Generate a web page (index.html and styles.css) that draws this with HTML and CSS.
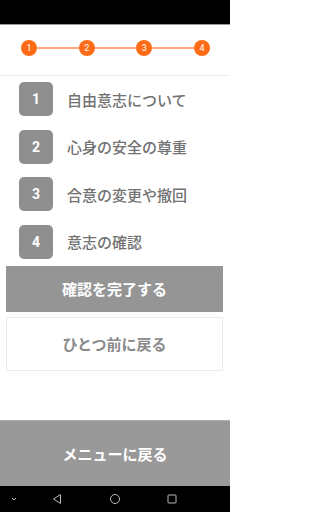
FILE: index.html
```html
<!DOCTYPE html>
<html lang="ja">
<head>
<meta charset="utf-8">
<link rel="stylesheet" href="styles.css">
</head>
<body>
<div class="page">
  <div class="statusbar"></div>
  <header class="header">
    <div class="stepper">
      <span class="dot">1</span><span class="line"></span>
      <span class="dot">2</span><span class="line"></span>
      <span class="dot">3</span><span class="line"></span>
      <span class="dot">4</span>
    </div>
  </header>
  <main class="content">
    <ul class="list">
      <li class="item"><span class="num">1</span><span class="label">自由意志について</span></li>
      <li class="item"><span class="num">2</span><span class="label">心身の安全の尊重</span></li>
      <li class="item"><span class="num">3</span><span class="label">合意の変更や撤回</span></li>
      <li class="item"><span class="num">4</span><span class="label">意志の確認</span></li>
    </ul>
    <div class="actions">
      <button class="btn btn-primary">確認を完了する</button>
      <button class="btn btn-secondary">ひとつ前に戻る</button>
    </div>
  </main>
  <button class="menu-btn">メニューに戻る</button>
  <nav class="navbar">
    <svg class="nav-icon" width="8" height="8" viewBox="0 0 8 8"><path d="M2 3 L4 5 L6 3" fill="none" stroke="#bbb" stroke-width="1"/></svg>
    <svg class="nav-icon" width="12" height="12" viewBox="0 0 12 12"><path d="M9.5 1.5 L2.5 6 L9.5 10.5 Z" fill="none" stroke="#bbb" stroke-width="1"/></svg>
    <svg class="nav-icon" width="12" height="12" viewBox="0 0 12 12"><circle cx="6" cy="6" r="4.5" fill="none" stroke="#bbb" stroke-width="1"/></svg>
    <svg class="nav-icon" width="12" height="12" viewBox="0 0 12 12"><rect x="2" y="2" width="8" height="8" rx="0.8" fill="none" stroke="#bbb" stroke-width="1"/></svg>
  </nav>
</div>
</body>
</html>
```
FILE: styles.css
```css
* { box-sizing: border-box; }
html, body { margin: 0; padding: 0; }
body {
  font-family: "Noto Sans CJK JP", "Noto Sans", Roboto, sans-serif;
  background: #fff;
}
.page {
  width: 230px;
  height: 512px;
  display: flex;
  flex-direction: column;
  overflow: hidden;
}
.statusbar {
  height: 25px;
  background: #000;
  border-bottom: 1px solid #9a9a9a;
  flex: none;
}
.header {
  height: 51px;
  flex: none;
  border-bottom: 1px solid #ececec;
  padding: 15px 20px 0 21px;
}
.stepper {
  display: flex;
  align-items: center;
}
.dot {
  width: 16px;
  height: 16px;
  border-radius: 50%;
  background: #fe6b16;
  color: #fff;
  font-family: Roboto, "Noto Sans", sans-serif;
  font-size: 9px;
  line-height: 16px;
  text-align: center;
  flex: none;
}
.line {
  flex: 1;
  height: 2px;
  background: #ffa684;
}
.content {
  flex: 1;
  display: flex;
  flex-direction: column;
}
.list {
  list-style: none;
  margin: 0;
  padding: 6px 0 0 19px;
  display: flex;
  flex-direction: column;
  gap: 13.5px;
}
.item {
  display: flex;
  align-items: center;
  height: 34px;
}
.num {
  width: 34px;
  height: 34px;
  border-radius: 5px;
  background: #8f8f8f;
  color: #fff;
  font-family: Roboto, "Noto Sans", sans-serif;
  font-weight: bold;
  font-size: 14px;
  line-height: 34px;
  text-align: center;
  flex: none;
}
.label {
  margin-left: 14px;
  font-size: 15px;
  font-weight: 500;
  color: #727272;
  letter-spacing: 0;
}
.actions {
  display: flex;
  flex-direction: column;
  padding: 7px 7px 0 6px;
  gap: 5px;
}
.btn {
  font-family: "Noto Sans CJK JP", sans-serif;
  font-weight: bold;
  font-size: 15px;
  border-radius: 0;
  margin: 0;
  width: 100%;
}
.btn-primary {
  height: 46px;
  background: #959595;
  color: #fff;
  border: none;
}
.btn-secondary {
  height: 54px;
  background: #fff;
  color: #8a8a8a;
  border: 1px solid #ebebeb;
  font-weight: bold;
}
.menu-btn {
  flex: none;
  height: 66px;
  width: 100%;
  margin: 0;
  background: #999;
  color: #fff;
  border: none;
  border-top: 1px solid #b0b0b0;
  font-family: "Noto Sans CJK JP", sans-serif;
  font-weight: bold;
  font-size: 15px;
}
.navbar {
  flex: none;
  height: 26px;
  background: #000;
  position: relative;
}
.nav-icon {
  position: absolute;
  top: 7px;
}
.nav-icon:nth-child(1) { left: 10px; top: 9px; }
.nav-icon:nth-child(2) { left: 51px; }
.nav-icon:nth-child(3) { left: 109px; }
.nav-icon:nth-child(4) { left: 166px; }
```
